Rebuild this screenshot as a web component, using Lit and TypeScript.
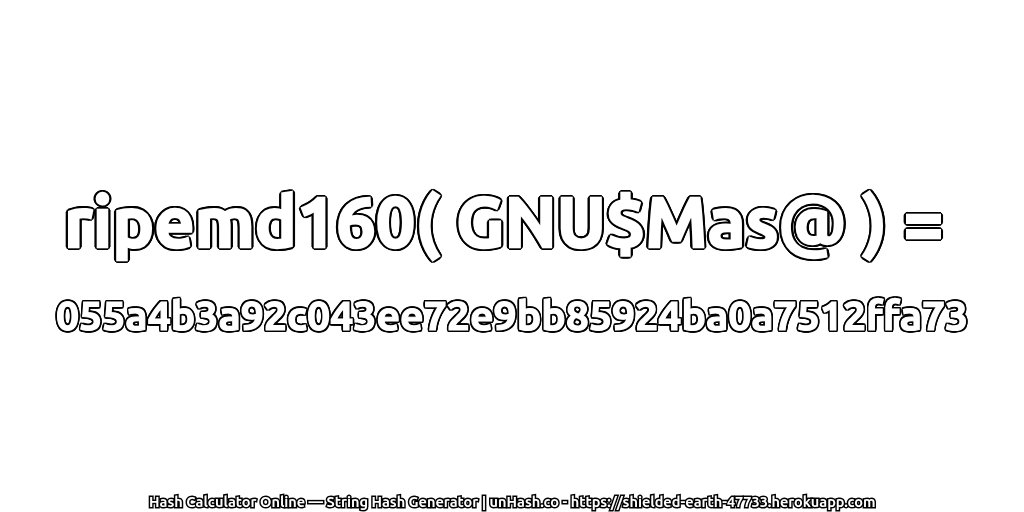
import { LitElement, html, css } from "lit";
import { customElement } from "lit/decorators.js";

@customElement("app-root")
export class AppRoot extends LitElement {
  static styles = css`
    :host { display: block; width: 1024px; height: 512px; background: #fff; font-family: "Ubuntu", "Noto Sans", "Open Sans", sans-serif; overflow: hidden; }
    .page { height: 512px; display: flex; flex-direction: column; align-items: center; }
    .main { flex: 1; display: flex; flex-direction: column; align-items: center; justify-content: center; gap: 26px; padding-top: 27px; }
    .title, .hash, .foot { color: #fff; white-space: pre; font-weight: 700; will-change: transform; }
    .title {
      font-size: 70px; line-height: 84px; -webkit-text-stroke: 2.4px #fff;
      text-shadow: 3.4px 0 #000, -3.4px 0 #000, 0 3.4px #000, 0 -3.4px #000,
        2.4px 2.4px #000, -2.4px 2.4px #000, 2.4px -2.4px #000, -2.4px -2.4px #000,
        3.1px 1.3px #000, -3.1px 1.3px #000, 3.1px -1.3px #000, -3.1px -1.3px #000,
        1.3px 3.1px #000, -1.3px 3.1px #000, 1.3px -3.1px #000, -1.3px -3.1px #000;
    }
    .hash {
      font-size: 41px; line-height: 52px; -webkit-text-stroke: 1.2px #fff;
      text-shadow: 2.2px 0 #000, -2.2px 0 #000, 0 2.2px #000, 0 -2.2px #000,
        1.6px 1.6px #000, -1.6px 1.6px #000, 1.6px -1.6px #000, -1.6px -1.6px #000,
        2px 0.8px #000, -2px 0.8px #000, 2px -0.8px #000, -2px -0.8px #000,
        0.8px 2px #000, -0.8px 2px #000, 0.8px -2px #000, -0.8px -2px #000;
    }
    .foot { font-size: 14.5px; line-height: 18px; paint-order: stroke fill; -webkit-text-stroke: 3px #000; padding-bottom: 1px; }
  `;
  render() {
    return html`<div class="page">
      <div class="main">
        <div class="title">ripemd160( GNU$Mas@ ) = </div>
        <div class="hash">055a4b3a92c043ee72e9bb85924ba0a7512ffa73</div>
      </div>
      <div class="foot">Hash Calculator Online — String Hash Generator | unHash.co - https://shielded-earth-47733.herokuapp.com</div>
    </div>`;
  }
}
